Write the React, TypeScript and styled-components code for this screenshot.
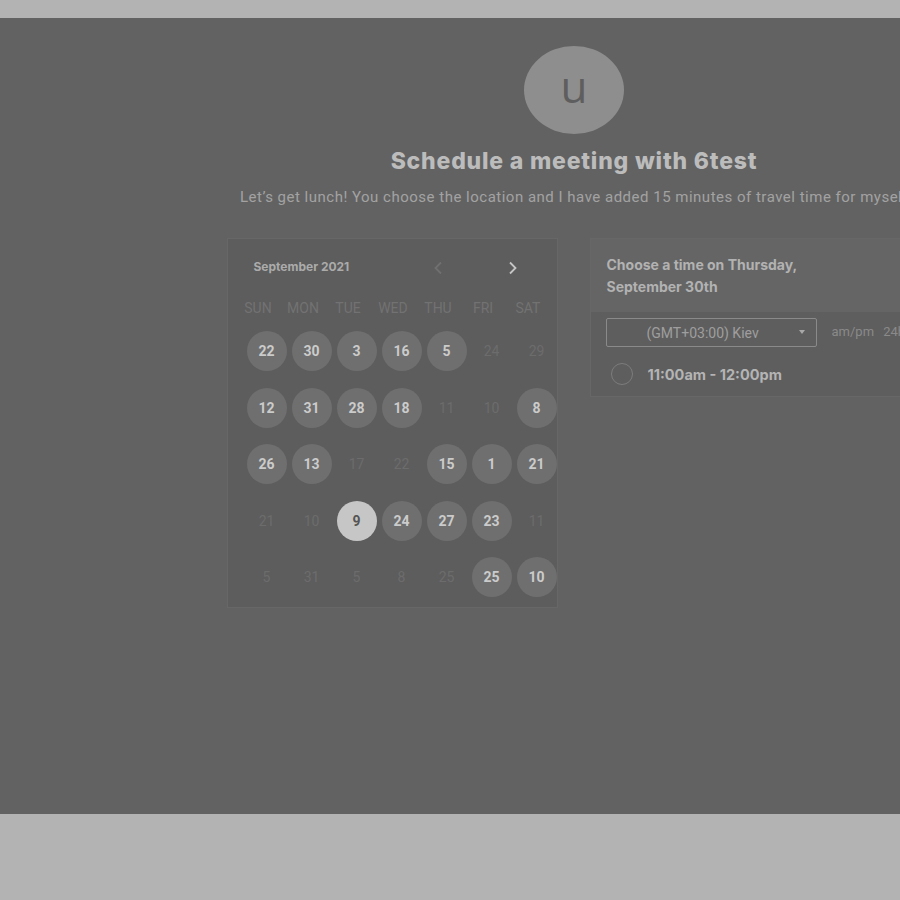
import React from "react";
import styled, { createGlobalStyle } from "styled-components";

const Global = createGlobalStyle`
  html, body { margin: 0; padding: 0; background: #b3b3b3; }
  body { font-family: Roboto, "Liberation Sans", sans-serif; }
`;

const Page = styled.div`
  padding: 18px 0 86px;
`;

const Stage = styled.div`
  height: 796px;
  background: #626262;
  overflow: hidden;
`;

const Column = styled.div`
  width: 1148px;
  display: flex;
  flex-direction: column;
  align-items: center;
`;

const Avatar = styled.div`
  margin-top: 28px;
  width: 100px;
  height: 88px;
  border-radius: 50%;
  background: #8e8e8e;
  color: #5e5e5e;
  font-family: "Open Sans", sans-serif;
  font-size: 44px;
  line-height: 80px;
  text-align: center;
`;

const Title = styled.h1`
  margin: 12px 0 0;
  font-family: Inter, sans-serif;
  font-weight: 800;
  font-size: 23px;
  letter-spacing: 0.8px;
  line-height: 30px;
  color: #bcbcbc;
`;

const Subtitle = styled.p`
  margin: 11px 0 0;
  font-size: 15px;
  letter-spacing: 0.5px;
  line-height: 20px;
  color: #a2a2a2;
  white-space: nowrap;
`;

const Panels = styled.div`
  margin-top: 31px;
  display: flex;
  gap: 32px;
  align-items: flex-start;
`;

const Calendar = styled.div`
  width: 315px;
  height: 368px;
  border: 1px solid #676767;
  background: #5d5d5d;
  padding: 0 0 0 14px;
  box-sizing: content-box;
`;

const CalHeader = styled.div`
  display: flex;
  align-items: center;
  height: 58px;
  padding-left: 12px;
`;

const Month = styled.div`
  flex: none;
  font-family: Inter, sans-serif;
  font-weight: 700;
  font-size: 12px;
  color: #ababab;
  width: 179px;
  margin-top: -3px;
`;

const NavBtn = styled.div`
  flex: none;
  width: 75px;
  display: flex;
  align-items: center;
`;

const Weekdays = styled.div`
  display: grid;
  grid-template-columns: repeat(7, 45px);
  margin-left: -6px;
  height: 22px;
  align-items: center;
`;

const Weekday = styled.div`
  text-align: center;
  font-size: 14px;
  color: #727272;
`;

const Days = styled.div`
  display: grid;
  grid-template-columns: repeat(7, 45px);
  grid-auto-rows: 56.5px;
  margin-top: 4px;
`;

const Day = styled.div<{ $kind: "a" | "d" | "s" }>`
  width: 40px;
  height: 40px;
  margin: 8px 0 0 5px;
  border-radius: 50%;
  display: flex;
  align-items: center;
  justify-content: center;
  font-size: 14px;
  font-weight: ${(p) => (p.$kind === "d" ? 400 : 700)};
  background: ${(p) =>
    p.$kind === "a" ? "#6f6f6f" : p.$kind === "s" ? "#c6c6c6" : "transparent"};
  color: ${(p) =>
    p.$kind === "a" ? "#cbcbcb" : p.$kind === "s" ? "#555555" : "#6c6c6c"};
`;

const TimePanel = styled.div`
  width: 330px;
  border: 1px solid #676767;
  background: #5e5e5e;
`;

const TimeHeader = styled.div`
  background: #656565;
  padding: 15px 16px 14px;
  font-family: Inter, sans-serif;
  font-weight: 700;
  font-size: 14px;
  line-height: 22px;
  color: #b2b2b2;
`;

const Controls = styled.div`
  display: flex;
  align-items: center;
  padding: 6px 15px 0;
  gap: 15px;
`;

const Select = styled.div`
  height: 27px;
  border: 1px solid #8a8a8a;
  border-radius: 2px;
  display: flex;
  align-items: center;
  position: relative;
  font-size: 14px;
  color: #9e9e9e;
  padding-left: 40px;
  box-sizing: content-box;
  width: 169px;
`;

const Caret = styled.span`
  position: absolute;
  right: 11px;
  top: 11px;
  border-left: 3.5px solid transparent;
  border-right: 3.5px solid transparent;
  border-top: 4px solid #a8a8a8;
`;

const Format = styled.div`
  font-size: 13px;
  color: #8a8a8a;
  white-space: nowrap;
  word-spacing: 6px;
  margin-top: -2px;
`;

const Slot = styled.div`
  display: flex;
  align-items: center;
  gap: 15px;
  padding: 16px 16px 11px 20px;
`;

const Radio = styled.span`
  width: 22px;
  height: 22px;
  border-radius: 50%;
  border: 1.5px solid #7c7c7c;
  box-sizing: border-box;
`;

const SlotText = styled.span`
  font-family: Inter, sans-serif;
  font-weight: 700;
  font-size: 14.5px;
  color: #b4b4b4;
`;

type K = "a" | "d" | "s";
const rows: [string, K][][] = [
  [["22","a"],["30","a"],["3","a"],["16","a"],["5","a"],["24","d"],["29","d"]],
  [["12","a"],["31","a"],["28","a"],["18","a"],["11","d"],["10","d"],["8","a"]],
  [["26","a"],["13","a"],["17","d"],["22","d"],["15","a"],["1","a"],["21","a"]],
  [["21","d"],["10","d"],["9","s"],["24","a"],["27","a"],["23","a"],["11","d"]],
  [["5","d"],["31","d"],["5","d"],["8","d"],["25","d"],["25","a"],["10","a"]],
];

const weekdays = ["SUN", "MON", "TUE", "WED", "THU", "FRI", "SAT"];

export default function App() {
  return (
    <>
      <Global />
      <Page>
        <Stage>
          <Column>
            <Avatar>u</Avatar>
            <Title>Schedule a meeting with 6test</Title>
            <Subtitle>
              Let’s get lunch! You choose the location and I have added 15 minutes of travel time for myself
            </Subtitle>
            <Panels>
              <Calendar>
                <CalHeader>
                  <Month>September 2021</Month>
                  <NavBtn>
                    <svg width="10" height="14" viewBox="0 0 10 14"><path d="M8 1.5 L2.5 7 L8 12.5" fill="none" stroke="#707070" strokeWidth="1.8" /></svg>
                  </NavBtn>
                  <NavBtn>
                    <svg width="10" height="14" viewBox="0 0 10 14"><path d="M2 1.5 L7.5 7 L2 12.5" fill="none" stroke="#c6c6c6" strokeWidth="1.8" /></svg>
                  </NavBtn>
                </CalHeader>
                <Weekdays>
                  {weekdays.map((w) => (
                    <Weekday key={w}>{w}</Weekday>
                  ))}
                </Weekdays>
                <Days>
                  {rows.flat().map(([n, k], i) => (
                    <Day key={i} $kind={k}>{n}</Day>
                  ))}
                </Days>
              </Calendar>
              <TimePanel>
                <TimeHeader>
                  Choose a time on Thursday,
                  <br />
                  September 30th
                </TimeHeader>
                <Controls>
                  <Select>
                    (GMT+03:00) Kiev
                    <Caret />
                  </Select>
                  <Format>am/pm 24h</Format>
                </Controls>
                <Slot>
                  <Radio />
                  <SlotText>11:00am - 12:00pm</SlotText>
                </Slot>
              </TimePanel>
            </Panels>
          </Column>
        </Stage>
      </Page>
    </>
  );
}
